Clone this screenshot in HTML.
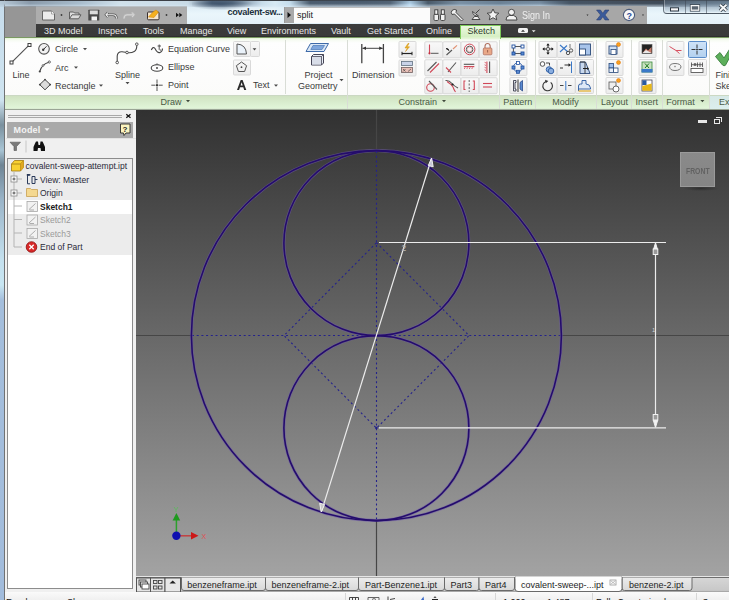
<!DOCTYPE html>
<html><head><meta charset="utf-8">
<style>
*{margin:0;padding:0;box-sizing:border-box}
html,body{width:729px;height:600px;overflow:hidden}
body{position:relative;font-family:"Liberation Sans",sans-serif;font-size:9px;color:#333;background:#dfe9f1}
.a{position:absolute}
.t{position:absolute;white-space:nowrap;line-height:1}
#glass{left:0;top:0;width:729px;height:40px;background:linear-gradient(180deg,#3c4046 0,#3c4046 1px,#b9d3e4 1px,#dcecf6 6px,#eaf6fb 14px,#e4f1f8 24px)}
#leftglass{left:0;top:0;width:5px;height:600px;background:linear-gradient(180deg,#3c4046 0,#3c4046 1px,#c6dcec 2px,#cfe4f0 100px,#7a909e 125px,#a8c4d4 150px,#6e8494 165px,#9ab4c8 200px,#c4e0ee 260px,#c8e6f2 285px,#a4bedc 300px,#a2bcdc 600px);border-right:1px solid #707274}
#appbtn{left:5px;top:6px;width:31px;height:31px;background:#969696}
#qat{left:36px;top:6px;width:151px;height:18px;background:#adadad}
#tabbar{left:36px;top:24px;width:693px;height:13px;background:linear-gradient(180deg,#3c3c3c,#393939 90%,#262626 100%)}
#greenline{left:5px;top:37px;width:724px;height:1px;background:#7a9a62}
#ribbon{left:5px;top:38px;width:724px;height:57px;background:linear-gradient(180deg,#e4f2d8 0,#f6fbf2 2px,#fefefe 5px,#fbfbfa 100%)}
#labelbar{left:5px;top:95px;width:724px;height:14px;background:linear-gradient(180deg,#cbd8c3 0,#cbd8c3 1px,#d0e2c2 1px,#e0f5d8 92%,#d8e6d0 100%)}
#rbottom{left:5px;top:109px;width:724px;height:1px;background:#9aa595}
#lpanel{left:5px;top:110px;width:131px;height:482px;background:#f0f0f0}
#canvas{left:136px;top:110px;width:593px;height:467px;background:linear-gradient(180deg,#313131 0%,#a3a3a3 100%)}
#doctabs{left:136px;top:577px;width:593px;height:15px;background:#d9d9d9}
#status{left:5px;top:592px;width:724px;height:8px;background:#f3f3f3}
.tab{color:#e6e6e6;top:27px}
.rt{color:#3a3a3a}
.lbl{color:#4a5a45;top:98px}
.sep{position:absolute;width:1px;background:#d6dcd2}
.btn{position:absolute;width:17px;height:16px;border:1px solid #dadada;background:linear-gradient(180deg,#fafafa,#ececec);border-radius:1px}
</style></head><body>
<div id="glass" class="a"></div>
<div id="leftglass" class="a"></div>
<div id="appbtn" class="a"></div>
<div id="qat" class="a"></div>
<div id="tabbar" class="a"></div>
<div id="greenline" class="a"></div>
<div id="ribbon" class="a"></div>
<div id="labelbar" class="a"></div>
<div id="rbottom" class="a"></div>
<div id="lpanel" class="a"></div>
<div id="canvas" class="a"></div>
<div id="doctabs" class="a"></div>
<div id="status" class="a"></div>


<svg class="a" style="left:136px;top:110px" width="593" height="467" viewBox="136 110 593 467">
<g fill="none">
<path d="M136 335.5 L192 335.5 M561 335.5 L729 335.5 M376.5 110 L376.5 151 M376.5 520 L376.5 577" stroke="#464646" stroke-width="1.2"/>
<g stroke="#24228c" stroke-width="1.1" stroke-dasharray="2 2.7">
<line x1="192" y1="335.5" x2="561" y2="335.5"/>
<line x1="376.5" y1="151" x2="376.5" y2="520"/>
<path d="M376.5 242.7 L469 335.5 L376.5 428.2 L284 335.5 Z"/>
</g>
<g stroke="#6e5aa8" stroke-width="3" opacity="0.55">
<circle cx="376.4" cy="335.6" r="185"/>
<circle cx="376.4" cy="243.1" r="92.5"/>
<circle cx="376.4" cy="428.1" r="92.5"/>
</g>
<g stroke="#240c6c" stroke-width="1.6">
<circle cx="376.4" cy="335.6" r="185"/>
<circle cx="376.4" cy="243.1" r="92.5"/>
<circle cx="376.4" cy="428.1" r="92.5"/>
</g>
<g stroke="#ececec" stroke-width="1.2">
<line x1="379" y1="242.5" x2="666" y2="242.5"/>
<line x1="379" y1="427.8" x2="666" y2="427.8"/>
<line x1="655.5" y1="243" x2="655.5" y2="427"/>
<line x1="321.5" y1="511.5" x2="431.5" y2="158.5"/>
</g>
</g>

<!-- arrowheads & dim text -->
<g fill="none" stroke="#f2f2f2" stroke-width="1">
<path d="M431.6 158 L428.3 165.5 L433.2 166.8 Z" fill="#c8c8d8"/>
<path d="M321.2 512 L324.6 504.5 L319.7 503.2 Z" fill="#c8c8c8"/>
<path d="M655.5 243 L653.3 250 L657.7 250 Z" fill="#f2f2f2"/>
<rect x="653.2" y="249" width="4.6" height="5.5" fill="#9a9a9a"/>
<path d="M655.5 427.3 L653.3 420.3 L657.7 420.3 Z" fill="#f2f2f2"/>
<rect x="653.2" y="414.5" width="4.6" height="5.5" fill="#9a9a9a"/>
</g>
<text x="401.5" y="251" font-family="Liberation Sans" font-size="8.5" fill="#b8b8b8">2</text>
<rect x="375.3" y="426.8" width="2.2" height="2.2" fill="#20208a"/>
<text x="652" y="332" font-family="Liberation Sans" font-size="6" fill="#cfcfcf">1</text>
<!-- triad -->
<line x1="176.4" y1="535.8" x2="176.4" y2="519" stroke="#2ca02c" stroke-width="1.5"/>
<path d="M172.6 520.5 L176.4 513 L180.2 520.5 Z" fill="#1e9a1e"/>
<text x="173.6" y="511.5" font-family="Liberation Sans" font-size="7.5" fill="#48c848" opacity="0.75">Y</text>
<line x1="176.4" y1="535.8" x2="192" y2="535.8" stroke="#c24040" stroke-width="1.5"/>
<path d="M191 532 L198.5 535.8 L191 539.6 Z" fill="#cc1818"/>
<text x="201.5" y="538.8" font-family="Liberation Sans" font-size="7" fill="#e05050">X</text>
<circle cx="176.4" cy="535.8" r="4.2" fill="#1010b0"/>
</svg>


<!-- title area -->
<div class="a" style="left:0;top:1px;width:729px;height:6px;background:linear-gradient(90deg,#b8cad8 0,#8a9aaa 30px,#a8bccc 80px,#d0e0ea 120px,#c8dae6 188px,#566a80 212px,#62768a 232px,#c8dcea 262px,#d8eaf4 275px,#c4dcec 290px,#4e5e70 310px,#5a6a7c 390px,#b8d8f0 410px,#4a5a6a 428px,#7a90a4 460px,#6a8094 500px,#8aa0b4 540px,#4a5664 570px,#3e4a58 660px,#7890a4 700px,#90a8bc 729px);-webkit-mask-image:linear-gradient(180deg,#000 40%,rgba(0,0,0,0.3) 100%)"></div>

<div class="a" style="left:192px;top:0px;width:64px;height:12px;background:radial-gradient(ellipse 50% 50% at 45% 35%,rgba(50,70,95,0.7),rgba(50,70,95,0) 100%)"></div>
<div class="a" style="left:290px;top:0px;width:140px;height:7px;background:radial-gradient(ellipse 50% 60% at 50% 20%,rgba(60,80,100,0.5),rgba(60,80,100,0) 100%)"></div>
<div class="a" style="left:500px;top:0px;width:120px;height:7px;background:radial-gradient(ellipse 50% 60% at 50% 20%,rgba(60,80,100,0.45),rgba(60,80,100,0) 100%)"></div>
<div class="t" style="left:227.5px;top:7.8px;font-size:9.2px;font-weight:bold;letter-spacing:-0.35px;color:#22313e;text-shadow:0 0 5px #fff">covalent-sw...</div>
<div class="a" style="left:284px;top:7px;width:10px;height:16px;background:#a9a9a9;border-left:1px solid #9a9a9a"></div>
<div class="a" style="left:294px;top:7px;width:136px;height:16px;background:#fbfbfb;border-top:1px solid #bdbdbd"></div>
<div class="t" style="left:297px;top:11.3px;font-size:9px;color:#222">split</div>
<div class="a" style="left:430px;top:6px;width:217px;height:18px;background:#a7a7a7"></div>
<div class="t" style="left:521.5px;top:10.6px;font-size:10px;color:#f0f0f0;transform:scaleX(0.9);transform-origin:left top">Sign In</div>
<!-- window controls -->
<div class="a" style="left:663px;top:-2px;width:68px;height:16px;border:1px solid rgba(50,60,70,0.6);border-radius:0 0 0 4px;background:linear-gradient(180deg,rgba(70,85,100,0.75),rgba(120,140,160,0.45) 60%,rgba(200,220,235,0.3));box-shadow:inset 0 0 0 1px rgba(255,255,255,0.3)"></div>
<div class="a" style="left:684.5px;top:0;width:1px;height:14px;background:rgba(60,70,80,0.55)"></div>
<div class="a" style="left:706px;top:0;width:1px;height:14px;background:rgba(60,70,80,0.55)"></div>
<svg class="a" style="left:0;top:0" width="729" height="37" viewBox="0 0 729 37">
<g>
<rect x="670.5" y="7.8" width="8" height="3.2" fill="#f8f8f8" stroke="#2a3540" stroke-width="1"/>
<rect x="691.2" y="5.6" width="7.6" height="4.6" fill="#3a4550" stroke="#2a3540" stroke-width="2.6"/>
<rect x="691.2" y="5.6" width="7.6" height="4.6" fill="#5a6570" stroke="#f8f8f8" stroke-width="1.3"/>
<path d="M720 4.8 L726.5 10.8 M726.5 4.8 L720 10.8" stroke="#2a3540" stroke-width="3.6"/>
<path d="M720 4.8 L726.5 10.8 M726.5 4.8 L720 10.8" stroke="#f8f8f8" stroke-width="2"/>
<!-- QAT -->
<path d="M42.5 11 L51.5 11 L54.5 14 L54.5 20 L42.5 20 Z" fill="#ececec" stroke="#5a5a5a" stroke-width="0.9"/>
<path d="M51.5 11 L51.5 14 L54.5 14" fill="#fff" stroke="#777" stroke-width="0.6"/>
<circle cx="61.5" cy="15" r="0.9" fill="#3a3a3a"/>
<path d="M69.5 18.8 L69.5 12 L73.5 12 L74.5 13 L79 13 L79 14.8 M69.5 18.8 L72 14.8 L81 14.8 L78.5 18.8 Z" fill="#dcdcdc" stroke="#555" stroke-width="0.9"/>
<rect x="88.3" y="9.8" width="11" height="10.8" rx="0.5" fill="#4a4a4a"/>
<rect x="89.8" y="10.5" width="8" height="3.8" fill="#dcdcdc"/>
<rect x="91.5" y="16.5" width="5.5" height="4" fill="#f4f4f4"/>
<path d="M108 12.5 L106 14.8 L108 17 M106.3 14.8 L113 14.8 Q116.5 14.8 116.5 18.5" fill="none" stroke="#555" stroke-width="2.4"/>
<path d="M108 12.5 L106 14.8 L108 17 M106.3 14.8 L113 14.8 Q116.5 14.8 116.5 18.5" fill="none" stroke="#f0f0f0" stroke-width="1.1"/>
<path d="M132 12.5 L134 14.8 L132 17 M133.7 14.8 L127 14.8 Q124 14.8 124 18.5" fill="none" stroke="#bdbdbd" stroke-width="2"/>
<path d="M132 12.5 L134 14.8 L132 17 M133.7 14.8 L127 14.8 Q124 14.8 124 18.5" fill="none" stroke="#d6d6d6" stroke-width="1"/>
<rect x="147.5" y="12" width="11.5" height="7.8" rx="1" fill="#f4e6d0" stroke="#3a3030" stroke-width="1"/>
<path d="M148.5 17 L153 12 L156 10 L158.5 12 L154 17.5 Z" fill="#f4b020" stroke="#d08000" stroke-width="0.5"/>
<circle cx="166.5" cy="15" r="0.9" fill="#3a3a3a"/>
<path d="M176 12.8 L179 15 L176 17.2 Z M179.3 12.8 L182.3 15 L179.3 17.2 Z" fill="#111"/>
<!-- search arrow -->
<path d="M287.5 12 L291 15 L287.5 18 Z" fill="#111"/>
<!-- info center icons -->
<g fill="#f2f2f2" stroke="#3a3a3a" stroke-width="0.9">
<rect x="434" y="14" width="4.5" height="6.5" rx="1.2"/>
<rect x="440.5" y="14" width="4.5" height="6.5" rx="1.2"/>
<rect x="434.8" y="9.8" width="3" height="4.5"/>
<rect x="441.3" y="9.8" width="3" height="4.5"/>
<path d="M452 10.5 Q454 8.5 456.5 10 L456 12.5 L463 19.5 L461.5 21 L454.5 14 L452 14.5 Q450.5 12.5 452 10.5 Z"/>
<path d="M472 19.5 L480 19.5 L477.5 16.5 L474.5 16.5 Z"/>
<path d="M472.5 11.5 Q473 16.5 478.5 16 Z"/>
<path d="M476 13 L479.5 9.5"/>
<path d="M493 9 L494.8 12.8 L498.8 13.2 L495.8 15.8 L496.7 19.8 L493 17.7 L489.3 19.8 L490.2 15.8 L487.2 13.2 L491.2 12.8 Z"/>
<circle cx="511.5" cy="12.3" r="3"/>
<path d="M506 20 Q506 16 509.5 15.5 L513.5 15.5 Q517 16 517 20 Z"/>
</g>
<path d="M586.5 14.5 L588.5 14.5 L587.5 16 Z" fill="#333"/>
<path d="M596.5 10 L600.5 10 L602.8 13.2 L605 10 L609 10 L605 15 L609 20 L605 20 L602.8 16.8 L600.5 20 L596.5 20 L600.5 15 Z" fill="#3a5a9a" stroke="#2a3a6a" stroke-width="0.5"/>
<circle cx="629" cy="15" r="5.6" fill="#f8f8f8" stroke="#4a5a7a" stroke-width="1.1"/>
<text x="626.4" y="18.5" font-family="Liberation Sans" font-weight="bold" font-size="9" fill="#2a4a9a">?</text>
<path d="M642 14.5 L644 14.5 L643 16 Z" fill="#333"/>
</g>
</svg>

<!-- left panel -->
<div class="a" style="left:8px;top:114.5px;width:114px;height:1px;background:#a8a8a8"></div>
<div class="a" style="left:8px;top:116.5px;width:114px;height:1px;background:#a8a8a8"></div>
<div class="a" style="left:7px;top:122px;width:126px;height:15.5px;background:#a9a9a9"></div>
<div class="t" style="left:13.5px;top:126.3px;font-size:9px;font-weight:bold;color:#f4f4f4;letter-spacing:0.2px">Model</div>
<div class="a" style="left:6px;top:137.5px;width:130px;height:1px;background:#e2e2e2"></div>
<div class="a" style="left:7px;top:158px;width:126px;height:431px;background:#fff;border:1px solid #8c8c8c"></div>
<div class="a" style="left:8px;top:159px;width:124px;height:41px;background:#ececec"></div>
<div class="a" style="left:8px;top:213.5px;width:124px;height:41.5px;background:#ececec"></div>
<div class="t" style="left:25.5px;top:161.5px;font-size:8.5px;color:#2a2a38">covalent-sweep-attempt.ipt</div>
<div class="t" style="left:40px;top:175.5px;font-size:8.5px;color:#2a2a38">View: Master</div>
<div class="t" style="left:40px;top:189px;font-size:8.5px;color:#2a2a38">Origin</div>
<div class="t" style="left:40px;top:202.5px;font-size:8.5px;font-weight:bold;color:#1a1a1a">Sketch1</div>
<div class="t" style="left:40px;top:216px;font-size:8.5px;color:#9a9a9a">Sketch2</div>
<div class="t" style="left:40px;top:229.5px;font-size:8.5px;color:#9a9a9a">Sketch3</div>
<div class="t" style="left:40px;top:243px;font-size:8.5px;color:#2a2a38">End of Part</div>
<svg class="a" style="left:0;top:110px" width="136" height="150" viewBox="0 110 136 150">
<g>
<!-- × -->
<path d="M126.3 114.3 L130.5 117.7 M130.5 114.3 L126.3 117.7" stroke="#111" stroke-width="1.3"/>
<!-- model dropdown -->
<path d="M44.5 128.3 L49.5 128.3 L47 131 Z" fill="#f4f4f4"/>
<!-- help -->
<path d="M120.5 124 L130 124 L130 133 L126 133 L124 135.5 L123.5 133 L120.5 133 Z" fill="#fbf4c0" stroke="#2a2a2a" stroke-width="0.9"/>
<text x="122.6" y="131.6" font-family="Liberation Sans" font-weight="bold" font-size="8" fill="#222">?</text>
<!-- filter -->
<path d="M10 142.2 L20.5 142.2 L16.5 146.5 L16.5 150.5 L14 150.5 L14 146.5 Z" fill="#7a7a7a" stroke="#555" stroke-width="0.6"/>
<line x1="26" y1="140.5" x2="26" y2="152.5" stroke="#c6c6c6" stroke-width="1"/>
<!-- binoculars -->
<path d="M33.5 151 L33.5 147 L35 143.5 L36 141.5 L38 141.5 L38.5 145 L40 145 L40.5 141.5 L42.5 141.5 L43.5 143.5 L45 147 L45 151 L41 151 L40.5 148 L38 148 L37.5 151 Z" fill="#111"/>
<!-- tree lines -->
<g stroke="#b4b4b4" stroke-width="1">
<line x1="14" y1="172" x2="14" y2="247"/>
<line x1="14" y1="247" x2="22" y2="247"/>
<line x1="14" y1="233" x2="22" y2="233"/>
<line x1="14" y1="219.5" x2="22" y2="219.5"/>
<line x1="14" y1="206" x2="22" y2="206"/>
<line x1="17" y1="193" x2="22" y2="193"/>
<line x1="17" y1="179" x2="22" y2="179"/>
</g>
<rect x="11" y="176" width="6" height="6" fill="#fafafa" stroke="#8a8a8a" stroke-width="0.8"/>
<path d="M12.5 179 L15.5 179 M14 177.5 L14 180.5" stroke="#333" stroke-width="0.8"/>
<rect x="11" y="190" width="6" height="6" fill="#fafafa" stroke="#8a8a8a" stroke-width="0.8"/>
<path d="M12.5 193 L15.5 193 M14 191.5 L14 194.5" stroke="#333" stroke-width="0.8"/>
<!-- part cube -->
<path d="M11.5 164 L14.5 160.5 L23.5 160.5 L23.5 167.5 L20.5 171 L11.5 171 Z" fill="#f8d030" stroke="#a07810" stroke-width="0.8"/>
<path d="M11.5 164 L20.5 164 L23.5 160.5 M20.5 164 L20.5 171" fill="none" stroke="#a07810" stroke-width="0.8"/>
<path d="M20.5 164 L23.5 160.5 L23.5 167.5 L20.5 171 Z" fill="#e0a820"/>
<!-- view icon -->
<path d="M27.5 174.8 L30.5 174.8 M27.5 174.8 L27.5 183.8 L30 183.8 M32 176.5 L35 176.5 L35 183.5 L32 183.5 Z M35 179.5 L37.5 179.5" fill="none" stroke="#2a3a5a" stroke-width="1"/>
<rect x="26.8" y="174" width="3" height="1.8" fill="#2a3a5a"/>
<!-- folder -->
<path d="M26.5 196.5 L26.5 188.5 L30.5 188.5 L31.5 189.5 L37.5 189.5 L37.5 196.5 Z" fill="#f4d890" stroke="#c8a050" stroke-width="0.8"/>
<!-- sketch icons -->
<g fill="#f2f2f2" stroke="#a8a8a8" stroke-width="0.8">
<rect x="27" y="201.5" width="10.5" height="10"/>
<rect x="27" y="215" width="10.5" height="10"/>
<rect x="27" y="228.5" width="10.5" height="10"/>
</g>
<g fill="none" stroke="#9a9a9a" stroke-width="0.8">
<path d="M29 209.5 L35.5 203.5 M29.5 210 L34 210"/>
<path d="M29 223 L35.5 217 M29.5 223.5 L34 223.5"/>
<path d="M29 236.5 L35.5 230.5 M29.5 237 L34 237"/>
</g>
<!-- end of part -->
<circle cx="31.5" cy="247" r="5.3" fill="#d82828" stroke="#8a1010" stroke-width="0.8"/>
<path d="M29.3 244.8 L33.7 249.2 M33.7 244.8 L29.3 249.2" stroke="#fff" stroke-width="1.3"/>
</g>
</svg>

<!-- doc tabs -->
<div class="a" style="left:136px;top:576px;width:593px;height:16px;background:linear-gradient(180deg,#d8d8d8,#c8c8c8 90%,#9a9a9a 100%)"></div>
<div class="a" style="left:136px;top:576px;width:593px;height:1px;background:#e6e6e6"></div>
<div class="a" style="left:136px;top:577px;width:593px;height:1px;background:#6e6e6e"></div>
<svg class="a" style="left:136px;top:576px" width="593" height="17" viewBox="136 576 593 17">
<defs><linearGradient id="tg" x1="0" y1="0" x2="0" y2="1"><stop offset="0" stop-color="#ececec"/><stop offset="1" stop-color="#d8d8d8"/></linearGradient></defs>
<g stroke="#555" stroke-width="1">
<rect x="136.5" y="578" width="14" height="14" fill="#e4e4e4"/>
<rect x="150.5" y="578" width="14.5" height="14" fill="#e4e4e4"/>
<rect x="165" y="578" width="15.5" height="14" fill="#e8e8e8"/>
</g>
<g fill="none" stroke="#444" stroke-width="0.9">
<rect x="139" y="580" width="7" height="5"/>
<rect x="140.5" y="582" width="7" height="5" fill="#f0f0f0"/>
<rect x="142" y="584" width="7" height="5" fill="#fff"/>
<rect x="153.5" y="580.5" width="3.5" height="3"/><rect x="158.5" y="580.5" width="3.5" height="3"/>
<rect x="153.5" y="586" width="3.5" height="3"/><rect x="158.5" y="586" width="3.5" height="3"/>
</g>
<path d="M169.5 583.5 L172.7 580.5 L175.9 583.5 Z" fill="#222"/>
<g stroke="#6a6a6a" stroke-width="1" fill="url(#tg)">
<path d="M181.5 577.5 L181.5 588 Q181.5 590.5 184 590.5 L263 590.5 Q265.5 590.5 265.5 588 L265.5 577.5"/>
<path d="M265.5 577.5 L265.5 588 Q265.5 590.5 268 590.5 L356 590.5 Q358.5 590.5 358.5 588 L358.5 577.5"/>
<path d="M358.5 577.5 L358.5 588 Q358.5 590.5 361 590.5 L442 590.5 Q444.5 590.5 444.5 588 L444.5 577.5"/>
<path d="M444.5 577.5 L444.5 588 Q444.5 590.5 447 590.5 L476.5 590.5 Q479 590.5 479 588 L479 577.5"/>
<path d="M479 577.5 L479 588 Q479 590.5 481.5 590.5 L512 590.5 Q514.5 590.5 514.5 588 L514.5 577.5"/>
<path d="M622 577.5 L622 588 Q622 590.5 624.5 590.5 L689.5 590.5 Q692 590.5 692 588 L692 577.5"/>
</g>
<path d="M515 577 L515 588.5 Q515 591.5 518 591.5 L619 591.5 Q622 591.5 622 588.5 L622 577 Z" fill="#fdfdfd" stroke="#6a6a6a" stroke-width="1"/>
<rect x="515.5" y="576.5" width="106" height="2" fill="#fdfdfd"/>
<rect x="610" y="580" width="6" height="5" fill="none" stroke="#9a9a9a" stroke-width="0.8"/>
<path d="M611 581 L615 584 M615 581 L611 584" stroke="#9a9a9a" stroke-width="0.6"/>
</g>
</svg>
<div class="t" style="left:187.3px;top:581px;font-size:9px;color:#1e1e1e">benzeneframe.ipt</div>
<div class="t" style="left:271.5px;top:581px;font-size:9px;color:#1e1e1e">benzeneframe-2.ipt</div>
<div class="t" style="left:365px;top:581px;font-size:9px;color:#1e1e1e">Part-Benzene1.ipt</div>
<div class="t" style="left:450.5px;top:581px;font-size:9px;color:#1e1e1e">Part3</div>
<div class="t" style="left:485px;top:581px;font-size:9px;color:#1e1e1e">Part4</div>
<div class="t" style="left:521px;top:581px;font-size:9px;color:#1e1e1e">covalent-sweep-...ipt</div>
<div class="t" style="left:629px;top:581px;font-size:9px;color:#1e1e1e">benzene-2.ipt</div>
<!-- status bar -->
<div class="a" style="left:5px;top:592px;width:724px;height:8px;background:linear-gradient(180deg,#fafafa,#f0f0f0)"></div>
<div class="a" style="left:5px;top:589px;width:131px;height:3px;background:#f0f0f0"></div>
<div class="t" style="left:6px;top:598.3px;font-size:9px;color:#111">Ready</div>
<div class="t" style="left:67px;top:598.3px;font-size:9px;color:#111">Ske</div>
<div class="t" style="left:503px;top:597.9px;font-size:9px;color:#111">1.000</div>
<div class="t" style="left:547px;top:597.9px;font-size:9px;color:#111">1.487</div>
<div class="t" style="left:596px;top:597.9px;font-size:9px;color:#111">Fully Constrained</div>
<div class="t" style="left:703px;top:597.9px;font-size:9px;color:#111">3</div>
<svg class="a" style="left:340px;top:592px" width="389" height="8" viewBox="340 592 389 8">
<g fill="none" stroke="#333" stroke-width="0.9">
<path d="M349.5 600 L349.5 597.5 L358.5 597.5 L358.5 600 M352.5 597.5 L352.5 600 M355.5 597.5 L355.5 600"/>
<path d="M368 600 L368 597.5 L379 597.5 L379 600" stroke="#555"/>
<path d="M372 599.5 L374 598.5 L376 599.5" stroke="#555"/>
<path d="M388 596.5 L388 600 M390 599.5 L395 598.5"/>
</g>
<path d="M421 600 L423.5 596.5 L424 600 Z" fill="#3a6ac8"/>
<path d="M435 596.3 L436.6 597.8 L433.4 597.8 Z M432 599 L438 599 L438 600 L432 600 Z" fill="#222"/>
<g></g>
<g stroke="#d6d6d6" stroke-width="1">
<line x1="345.5" y1="593" x2="345.5" y2="600"/>
<line x1="495.5" y1="593" x2="495.5" y2="600"/>
<line x1="592.5" y1="593" x2="592.5" y2="600"/>
<line x1="696.5" y1="593" x2="696.5" y2="600"/>
</g>
</svg>

<!-- viewcube -->
<div class="a" style="left:683px;top:186px;width:36px;height:5px;background:radial-gradient(ellipse at center,rgba(20,20,20,0.45),rgba(20,20,20,0) 70%)"></div>
<div class="a" style="left:680px;top:152px;width:35px;height:35px;background:linear-gradient(180deg,#8a8a8a,#858585);border:1px solid #9a9a9a"></div>
<div class="t" style="left:685.7px;top:165.5px;font-size:9.5px;font-weight:bold;color:#626262;transform:scaleX(0.72);transform-origin:left top">FRONT</div>
<div class="a" style="left:698px;top:120px;width:9px;height:2.5px;background:#e8e8e8"></div>
<div class="a" style="left:714px;top:118.5px;width:5.5px;height:5px;border:1.3px solid #e8e8e8;border-top-width:1.8px"></div>
<div class="a" style="left:716px;top:116.5px;width:5.5px;height:5px;border-top:1.3px solid #e8e8e8;border-right:1.3px solid #e8e8e8"></div>

<!-- tabs -->
<div class="t tab" style="left:44px">3D Model</div>
<div class="t tab" style="left:98px">Inspect</div>
<div class="t tab" style="left:143px">Tools</div>
<div class="t tab" style="left:180px">Manage</div>
<div class="t tab" style="left:227px">View</div>
<div class="t tab" style="left:261px">Environments</div>
<div class="t tab" style="left:331px">Vault</div>
<div class="t tab" style="left:367px">Get Started</div>
<div class="t tab" style="left:426px">Online</div>
<div class="a" style="left:460px;top:24.5px;width:41px;height:14px;background:linear-gradient(180deg,#eaf8de,#d6efc4 80%,#e8f6dc);border:1px solid #7cc858;border-bottom:none"></div>
<div class="t tab" style="left:467.5px;color:#2e3a2c">Sketch</div>
<svg class="a" style="left:515px;top:26px" width="24" height="10" viewBox="515 26 24 10">
<rect x="518" y="28" width="10" height="5" rx="1.5" fill="#f2f2f2"/>
<path d="M521 31.8 L523 29.8 L525 31.8 Z" fill="#333"/>
<path d="M531.8 30.3 L535.6 30.3 L533.7 32.3 Z" fill="#e8e8e8"/>
</svg>


<div class="a" style="left:710px;top:96px;width:19px;height:13px;background:linear-gradient(180deg,#d6e8e6,#dcefee)"></div>
<!-- ribbon -->
<div class="t rt" style="left:12.5px;top:71.2px;">Line</div>
<div class="t rt" style="left:55px;top:45.3px;">Circle</div>
<div class="t rt" style="left:55px;top:63.7px;">Arc</div>
<div class="t rt" style="left:55px;top:81.6px;">Rectangle</div>
<div class="t rt" style="left:115px;top:71.2px;">Spline</div>
<div class="t rt" style="left:168px;top:45.1px;">Equation Curve</div>
<div class="t rt" style="left:168px;top:63.3px;">Ellipse</div>
<div class="t rt" style="left:168px;top:81.0px;">Point</div>
<div class="t rt" style="left:253px;top:81.4px;">Text</div>
<div class="t rt" style="left:304.5px;top:71.0px;">Project</div>
<div class="t rt" style="left:298px;top:81.8px;">Geometry</div>
<div class="t rt" style="left:352px;top:71.0px;">Dimension</div>
<div class="t rt" style="left:715.5px;top:71.0px;">Finish</div>
<div class="t rt" style="left:715.5px;top:81.9px;">Sketch</div>
<div class="t lbl" style="left:160.5px;top:97.9px;">Draw</div>
<div class="t lbl" style="left:398.4px;top:97.9px;">Constrain</div>
<div class="t lbl" style="left:503.2px;top:97.9px;">Pattern</div>
<div class="t lbl" style="left:552.3px;top:97.9px;">Modify</div>
<div class="t lbl" style="left:600.9px;top:97.9px;">Layout</div>
<div class="t lbl" style="left:635.4px;top:97.9px;">Insert</div>
<div class="t lbl" style="left:666.2px;top:97.9px;">Format</div>
<div class="t lbl" style="left:719px;top:97.9px;">Exit</div>
<svg class="a" style="left:0;top:0" width="729" height="110" viewBox="0 0 729 110">
<defs><linearGradient id="bg" x1="0" y1="0" x2="0" y2="1"><stop offset="0" stop-color="#f9f9f9"/><stop offset="1" stop-color="#ececec"/></linearGradient><linearGradient id="bb" x1="0" y1="0" x2="0" y2="1"><stop offset="0" stop-color="#cfe3f7"/><stop offset="1" stop-color="#b3d1ef"/></linearGradient></defs>
<line x1="285.5" y1="40" x2="285.5" y2="94" stroke="#d9ddd6" stroke-width="1"/>
<line x1="347.5" y1="40" x2="347.5" y2="109" stroke="#d9ddd6" stroke-width="1"/>
<line x1="499.5" y1="40" x2="499.5" y2="109" stroke="#d9ddd6" stroke-width="1"/>
<line x1="535.5" y1="40" x2="535.5" y2="109" stroke="#d9ddd6" stroke-width="1"/>
<line x1="596.5" y1="40" x2="596.5" y2="109" stroke="#d9ddd6" stroke-width="1"/>
<line x1="631.5" y1="40" x2="631.5" y2="109" stroke="#d9ddd6" stroke-width="1"/>
<line x1="662.5" y1="40" x2="662.5" y2="109" stroke="#d9ddd6" stroke-width="1"/>
<line x1="709.5" y1="40" x2="709.5" y2="109" stroke="#d9ddd6" stroke-width="1"/>
<path d="M83 48 L87 48 L85 50.2 Z" fill="#4a4a4a"/>
<path d="M74 66.5 L78 66.5 L76 68.7 Z" fill="#4a4a4a"/>
<path d="M99 84.5 L103 84.5 L101 86.7 Z" fill="#4a4a4a"/>
<path d="M125.5 82 L129.5 82 L127.5 84.2 Z" fill="#4a4a4a"/>
<path d="M274 84.5 L278 84.5 L276 86.7 Z" fill="#4a4a4a"/>
<path d="M339.5 79 L343.5 79 L341.5 81.2 Z" fill="#4a4a4a"/>
<path d="M186 100 L190 100 L188 102.2 Z" fill="#3f4a3c"/>
<path d="M442 100 L446 100 L444 102.2 Z" fill="#3f4a3c"/>
<path d="M700.4 100 L704.4 100 L702.4 102.2 Z" fill="#3f4a3c"/>
<rect x="233.5" y="41.5" width="17" height="15" rx="1" fill="url(#bg)" stroke="#d9d9d9"/>
<rect x="250.5" y="41.5" width="9" height="15" rx="1" fill="url(#bg)" stroke="#d9d9d9"/>
<rect x="233.5" y="60.0" width="17" height="15" rx="1" fill="url(#bg)" stroke="#d9d9d9"/>
<rect x="399.0" y="41.5" width="17" height="16" rx="1" fill="url(#bg)" stroke="#d9d9d9"/>
<rect x="399.0" y="60.0" width="17" height="16" rx="1" fill="url(#bg)" stroke="#d9d9d9"/>
<rect x="424.8" y="41.8" width="18" height="16" rx="1" fill="url(#bg)" stroke="#d9d9d9"/>
<rect x="442.9" y="41.8" width="18" height="16" rx="1" fill="url(#bg)" stroke="#d9d9d9"/>
<rect x="461.0" y="41.8" width="18" height="16" rx="1" fill="url(#bg)" stroke="#d9d9d9"/>
<rect x="479.1" y="41.8" width="18" height="16" rx="1" fill="url(#bg)" stroke="#d9d9d9"/>
<rect x="424.8" y="59.8" width="18" height="16" rx="1" fill="url(#bg)" stroke="#d9d9d9"/>
<rect x="442.9" y="59.8" width="18" height="16" rx="1" fill="url(#bg)" stroke="#d9d9d9"/>
<rect x="461.0" y="59.8" width="18" height="16" rx="1" fill="url(#bg)" stroke="#d9d9d9"/>
<rect x="479.1" y="59.8" width="18" height="16" rx="1" fill="url(#bg)" stroke="#d9d9d9"/>
<rect x="424.8" y="77.7" width="18" height="16" rx="1" fill="url(#bg)" stroke="#d9d9d9"/>
<rect x="442.9" y="77.7" width="18" height="16" rx="1" fill="url(#bg)" stroke="#d9d9d9"/>
<rect x="461.0" y="77.7" width="18" height="16" rx="1" fill="url(#bg)" stroke="#d9d9d9"/>
<rect x="479.1" y="77.7" width="18" height="16" rx="1" fill="url(#bg)" stroke="#d9d9d9"/>
<rect x="509.9" y="41.5" width="17" height="16" rx="1" fill="url(#bg)" stroke="#d9d9d9"/>
<rect x="509.9" y="59.5" width="17" height="16" rx="1" fill="url(#bg)" stroke="#d9d9d9"/>
<rect x="509.9" y="77.5" width="17" height="16" rx="1" fill="url(#bg)" stroke="#d9d9d9"/>
<rect x="539.0" y="41.5" width="18" height="16" rx="1" fill="url(#bg)" stroke="#d9d9d9"/>
<rect x="557.2" y="41.5" width="18" height="16" rx="1" fill="url(#bg)" stroke="#d9d9d9"/>
<rect x="575.5" y="41.5" width="18" height="16" rx="1" fill="url(#bg)" stroke="#d9d9d9"/>
<rect x="539.0" y="59.5" width="18" height="16" rx="1" fill="url(#bg)" stroke="#d9d9d9"/>
<rect x="557.2" y="59.5" width="18" height="16" rx="1" fill="url(#bg)" stroke="#d9d9d9"/>
<rect x="575.5" y="59.5" width="18" height="16" rx="1" fill="url(#bg)" stroke="#d9d9d9"/>
<rect x="539.0" y="77.5" width="18" height="16" rx="1" fill="url(#bg)" stroke="#d9d9d9"/>
<rect x="557.2" y="77.5" width="18" height="16" rx="1" fill="url(#bg)" stroke="#d9d9d9"/>
<rect x="575.5" y="77.5" width="18" height="16" rx="1" fill="url(#bg)" stroke="#d9d9d9"/>
<rect x="606.0" y="41.5" width="17" height="16" rx="1" fill="url(#bg)" stroke="#d9d9d9"/>
<rect x="639.0" y="41.5" width="17" height="16" rx="1" fill="url(#bg)" stroke="#d9d9d9"/>
<rect x="606.0" y="59.5" width="17" height="16" rx="1" fill="url(#bg)" stroke="#d9d9d9"/>
<rect x="639.0" y="59.5" width="17" height="16" rx="1" fill="url(#bg)" stroke="#d9d9d9"/>
<rect x="606.0" y="77.5" width="17" height="16" rx="1" fill="url(#bg)" stroke="#d9d9d9"/>
<rect x="639.0" y="77.5" width="17" height="16" rx="1" fill="url(#bg)" stroke="#d9d9d9"/>
<rect x="666.9" y="41.5" width="17" height="16" rx="1" fill="url(#bg)" stroke="#d9d9d9"/>
<rect x="666.9" y="59.5" width="17" height="16" rx="1" fill="url(#bg)" stroke="#d9d9d9"/>
<rect x="688.5" y="41.5" width="18" height="16" rx="1" fill="url(#bb)" stroke="#5a8cc8"/>
<rect x="688.5" y="59.5" width="18" height="16" rx="1" fill="url(#bg)" stroke="#d9d9d9"/>
<g fill="none" stroke="#505050" stroke-width="1">
<!-- line -->
<line x1="12.2" y1="61.8" x2="28.6" y2="45.6" stroke-width="1.1"/>
<rect x="10" y="61" width="3" height="3" fill="#fff" stroke="#404040"/>
<rect x="28" y="43.5" width="3" height="3" fill="#fff" stroke="#404040"/>
<!-- circle -->
<circle cx="44" cy="48.8" r="5.3" fill="#f2f2f2" stroke="#555" stroke-width="1.1"/>
<line x1="43" y1="50" x2="46.5" y2="46.3" stroke="#333"/>
<circle cx="43.2" cy="49.8" r="1.2" fill="#333" stroke="none"/>
<!-- arc -->
<path d="M39.8 71.3 Q41.5 64.5 48.8 62.2" stroke="#444" stroke-width="1.1"/>
<circle cx="39.8" cy="71.5" r="1.1" fill="#444" stroke="none"/>
<circle cx="43" cy="65.5" r="0.9" fill="#fff" stroke="#444" stroke-width="0.7"/>
<circle cx="49.3" cy="62" r="1.1" fill="#fff" stroke="#444" stroke-width="0.8"/>
<!-- rectangle -->
<path d="M45 79.5 L50.3 84.6 L45 89.8 L39.7 84.6 Z" fill="#dcdcdc" stroke="#444"/>
<circle cx="45" cy="79.6" r="0.9" fill="#444" stroke="none"/>
<circle cx="39.8" cy="84.6" r="0.9" fill="#444" stroke="none"/>
<circle cx="50.2" cy="84.6" r="0.9" fill="#444" stroke="none"/>
<!-- spline -->
<path d="M117.2 62.5 L117.2 56 Q117.5 51.5 122 51.7 L127 52.5 Q131 53.3 134.2 51.5 Q136.8 50 136.8 45.5" stroke="#444" stroke-width="1.1"/>
<circle cx="117.2" cy="62.5" r="1.3" fill="#fff" stroke="#444" stroke-width="0.9"/>
<circle cx="127" cy="52.5" r="1.3" fill="#fff" stroke="#444" stroke-width="0.9"/>
<circle cx="136.8" cy="44.2" r="1.3" fill="#fff" stroke="#444" stroke-width="0.9"/>
<!-- equation curve -->
<path d="M151.3 50 Q153 46 155 48.5 Q157.5 53.5 160 52.5 Q162.5 51.5 162.5 48.5" stroke="#444" stroke-width="1.1"/>
<path d="M159.2 44.5 L159.2 49.5 Q159.5 50.5 161 50 M157.6 46 L161 46" stroke="#444" stroke-width="0.9"/>
<!-- ellipse -->
<ellipse cx="157" cy="68" rx="5.8" ry="3.3" stroke="#444" stroke-width="1.1"/>
<circle cx="157" cy="68" r="0.9" fill="#333" stroke="none"/>
<path d="M155.8 64.8 L157 63.6 L158.2 64.8" stroke="#444" stroke-width="0.8"/>
<!-- point -->
<path d="M151.3 85.2 L155.5 85.2 M158.5 85.2 L162.7 85.2 M157 79.5 L157 83.7 M157 86.7 L157 91" stroke="#555" stroke-width="1"/>
<rect x="156" y="84.2" width="2" height="2" fill="#333" stroke="none"/>
<!-- fillet -->
<path d="M237 54 L237 44 Q246 44.5 246.5 54 Z" fill="#eaf2fa" stroke="#555" stroke-width="1"/>
<!-- polygon -->
<path d="M241.5 62 L246.6 65.7 L244.6 71.5 L238.4 71.5 L236.4 65.7 Z" fill="none" stroke="#555" stroke-width="1"/>
<circle cx="241.5" cy="67.2" r="0.9" fill="#444" stroke="none"/>
<!-- project geometry -->
<path d="M310.5 43.5 L328.5 43.5 L324 51.5 L306 51.5 Z" fill="#dbe8f6" stroke="#3e6aa8" stroke-width="1"/>
<path d="M313 45.5 L324.5 45.5 L322 49.5 L310.8 49.5 Z" fill="#7fa6dc" stroke="#4a78b8" stroke-width="0.7"/>
<path d="M311.5 56.5 L313.5 54.5 L323.5 54.5 L323.5 63 L321.5 65 L311.5 65 Z" fill="#e8eef6" stroke="#445" stroke-width="1"/>
<path d="M311.5 56.5 L321.5 56.5 L323.5 54.5 M321.5 56.5 L321.5 65" stroke="#445" stroke-width="0.8"/>
<path d="M312 57 L321 57 L321 64.5 L312 64.5 Z" fill="#d8dde8" stroke="none"/>
<!-- dimension -->
<path d="M361.8 44 L361.8 63.2 M383.4 44 L383.4 63.2" stroke="#444" stroke-width="1.3"/>
<path d="M362.5 48.3 L382.7 48.3" stroke="#444" stroke-width="1"/>
<path d="M362.5 48.3 L366 46.5 L366 50.1 Z M382.7 48.3 L379.2 46.5 L379.2 50.1 Z" fill="#333" stroke="none"/>
<!-- auto dimension -->
<path d="M408 43.5 L405 48 L407.5 48 L405.5 51.5 L409.5 46.8 L407 46.8 L409 43.5 Z" fill="#f2b820" stroke="#c98a10" stroke-width="0.5"/>
<path d="M402 53.5 L412 53.5" stroke="#222" stroke-width="1.2"/>
<path d="M402 51.8 L402 55.2 M412 51.8 L412 55.2" stroke="#222" stroke-width="1"/>
<!-- show constraints -->
<rect x="401.5" y="61.5" width="11" height="4" fill="#c9d3e8" stroke="#607080" stroke-width="0.8"/>
<rect x="401.5" y="67.5" width="11" height="5" fill="#e9c0b8" stroke="#706060" stroke-width="0.8"/>
<path d="M403 69 L405.5 71.5 M405.5 69 L403 71.5 M408 71.5 L411 69" stroke="#333" stroke-width="0.6"/>
</g>
<path d="M237 90 L240.7 80 L242.6 80 L246.3 90 L244.2 90 L243.3 87.3 L240 87.3 L239.1 90 Z M240.6 85.6 L242.7 85.6 L241.65 82.3 Z" fill="#2a2a2a"/>
<path d="M252.6 48.2 L256.4 48.2 L254.5 50.4 Z" fill="#444"/>
<g fill="none" stroke-width="1">
<!-- row1 constraints: cols 424.3,442.4,460.5,478.6 ; rows 41.3,59.3,77.2 -->
<!-- coincident -->
<line x1="429.5" y1="44.5" x2="429.5" y2="53" stroke="#d04858" stroke-width="1.1"/>
<circle cx="429.5" cy="53.3" r="1.1" fill="#c03040"/>
<line x1="431" y1="53.3" x2="438.5" y2="53.3" stroke="#555" stroke-width="1"/>
<!-- collinear -->
<line x1="446.5" y1="55" x2="452" y2="50" stroke="#555" stroke-width="1.1"/>
<line x1="453" y1="49" x2="457" y2="45.3" stroke="#e09070" stroke-width="1.1"/>
<path d="M446 48.5 L449 50.5 L448 48.8 Z" fill="#222" stroke="#222" stroke-width="0.8"/>
<!-- concentric -->
<circle cx="469.6" cy="49.4" r="5.3" stroke="#d04858" stroke-width="1"/>
<circle cx="469.6" cy="49.4" r="3.3" stroke="#555" stroke-width="1"/>
<circle cx="469.6" cy="49.4" r="2.3" stroke="#d88" stroke-width="0.5"/>
<!-- fix (lock) -->
<path d="M485 48 L485 46.5 Q485 43.5 487.6 43.5 Q490.2 43.5 490.2 46.5 L490.2 48" stroke="#b07060" stroke-width="1.1"/>
<rect x="483.3" y="48" width="8.6" height="6.8" rx="1" fill="#e9a888" stroke="#b07060" stroke-width="0.8"/>
<line x1="487.6" y1="50" x2="487.6" y2="52.5" stroke="#8a5040" stroke-width="0.8"/>
<!-- parallel -->
<line x1="427.5" y1="71" x2="436.5" y2="62" stroke="#555" stroke-width="1.1"/>
<line x1="430" y1="72.5" x2="439" y2="63.5" stroke="#d04858" stroke-width="1.1"/>
<!-- perpendicular -->
<line x1="448" y1="72" x2="456" y2="62.5" stroke="#555" stroke-width="1.1"/>
<line x1="446" y1="67.5" x2="451" y2="72.5" stroke="#d04858" stroke-width="1.1"/>
<!-- horizontal -->
<line x1="463.8" y1="64.3" x2="474.3" y2="64.3" stroke="#555" stroke-width="1.1"/>
<line x1="463.8" y1="66.6" x2="474.3" y2="66.6" stroke="#d04858" stroke-width="1.2"/>
<path d="M465 67.5 L464.3 69 M467.5 67.5 L466.8 69 M470 67.5 L469.3 69 M472.5 67.5 L471.8 69" stroke="#d04858" stroke-width="0.8"/>
<!-- vertical -->
<line x1="489.6" y1="61.5" x2="489.6" y2="73" stroke="#555" stroke-width="1.1"/>
<line x1="486.9" y1="61.5" x2="486.9" y2="73" stroke="#d04858" stroke-width="1.1"/>
<path d="M486 63 L484.6 62.3 M486 65.5 L484.6 64.8 M486 68 L484.6 67.3 M486 70.5 L484.6 69.8" stroke="#d04858" stroke-width="0.8"/>
<!-- tangent -->
<circle cx="430.5" cy="87.5" r="3.8" stroke="#d04858" stroke-width="1.1"/>
<line x1="429" y1="81" x2="437" y2="89.5" stroke="#555" stroke-width="1.1"/>
<!-- smooth -->
<path d="M445.5 80.5 Q449 80 452 83.5 Q454 86 458 88" stroke="#555" stroke-width="1.1"/>
<path d="M447 81.5 Q451 84 453 87 Q454 90 455.5 92" stroke="#d04858" stroke-width="1.1"/>
<circle cx="452.5" cy="84.5" r="1.1" fill="#222"/>
<!-- symmetric -->
<path d="M465.5 81 L464 81 L464 89.5 L465.5 89.5 M472.8 81 L474.3 81 L474.3 89.5 L472.8 89.5" stroke="#d04858" stroke-width="1.1"/>
<path d="M469.2 80 L469.2 82 M469.2 83.5 L469.2 85.5 M469.2 87 L469.2 89 M469.2 90.5 L469.2 92" stroke="#555" stroke-width="0.9"/>
<!-- equal -->
<line x1="483" y1="83.5" x2="492" y2="83.5" stroke="#d04858" stroke-width="1.1"/>
<line x1="483" y1="87" x2="492" y2="87" stroke="#d04858" stroke-width="1.1"/>

<!-- pattern: rect -->
<path d="M514 46.5 L522 46.5 M514 53.5 L522 53.5 M513.4 47.5 L513.4 52.5" stroke="#444" stroke-width="0.9"/>
<rect x="512" y="45" width="3" height="3" fill="#fff" stroke="#2050a0" stroke-width="0.9"/>
<rect x="521" y="45" width="3" height="3" fill="#fff" stroke="#2050a0" stroke-width="0.9"/>
<rect x="512" y="52" width="3" height="3" fill="#5a8ad0" stroke="#2050a0" stroke-width="0.9"/>
<rect x="521" y="52" width="3" height="3" fill="#5a8ad0" stroke="#2050a0" stroke-width="0.9"/>
<!-- pattern: circular -->
<circle cx="517.9" cy="67.3" r="4.5" stroke="#2a5aa8" stroke-width="0.9"/>
<rect x="516.5" y="61.5" width="3" height="3" fill="#fff" stroke="#2050a0" stroke-width="0.8"/>
<rect x="512" y="66" width="3" height="3" fill="#5a8ad0" stroke="#2050a0" stroke-width="0.8"/>
<rect x="521" y="66" width="3" height="3" fill="#5a8ad0" stroke="#2050a0" stroke-width="0.8"/>
<rect x="516.5" y="70.3" width="3" height="3" fill="#5a8ad0" stroke="#2050a0" stroke-width="0.8"/>
<!-- pattern: mirror -->
<path d="M513.5 80.5 L516 80.5 L516 82.5 L515 82.5 L515 89 L516 89 L516 91 L513.5 91 Z" fill="#e8eef6" stroke="#2a2a3a" stroke-width="0.8"/>
<path d="M522.5 80.5 L520 82.5 L520 89 L522.5 91 Z" fill="#5a8ad0" stroke="#2a4a8a" stroke-width="0.8"/>
<line x1="518" y1="79.5" x2="518" y2="92" stroke="#333" stroke-width="1"/>

<!-- modify: move -->
<path d="M543 49 L553 49 M548 44 L548 54" stroke="#222" stroke-width="1"/>
<path d="M548 43.3 L546.3 45.5 L549.7 45.5 Z M548 54.7 L546.3 52.5 L549.7 52.5 Z M542.3 49 L544.5 47.3 L544.5 50.7 Z M553.7 49 L551.5 47.3 L551.5 50.7 Z" fill="#222"/>
<rect x="546.8" y="47.8" width="2.4" height="2.4" fill="#fff" stroke="#222" stroke-width="0.6"/>
<!-- trim -->
<path d="M560 45 L568 52 M560 52 L567 45.5" stroke="#3a78c8" stroke-width="1.1"/>
<circle cx="568" cy="53" r="1.7" stroke="#333" stroke-width="0.8"/>
<circle cx="571" cy="50.5" r="1.7" stroke="#333" stroke-width="0.8"/>
<line x1="570" y1="44" x2="570" y2="48" stroke="#555" stroke-width="0.8"/>
<!-- scale -->
<rect x="579.5" y="44" width="11" height="11" fill="#a8c4ea" stroke="#2a4a7a" stroke-width="0.9"/>
<rect x="579.5" y="49" width="6" height="6" fill="#fff" stroke="#2a4a7a" stroke-width="0.9"/>
<!-- copy -->
<circle cx="542.5" cy="64" r="2.3" fill="#fff" stroke="#444" stroke-width="0.9"/>
<circle cx="549" cy="69.5" r="2.8" fill="#8aaee0" stroke="#2a5aa0" stroke-width="0.9"/>
<circle cx="551" cy="71" r="2.8" fill="#8aaee0" stroke="#2a5aa0" stroke-width="0.9"/>
<path d="M546 63 L549.5 63 L549.5 65.5" stroke="#333" stroke-width="0.9"/>
<!-- extend -->
<path d="M560 68 L563 68 M564.5 65 L569 65" stroke="#333" stroke-width="1"/>
<path d="M571 65 L568.5 63.3 L568.5 66.7 Z" fill="#222"/>
<line x1="571.5" y1="61.5" x2="571.5" y2="73" stroke="#3a78c8" stroke-width="1"/>
<!-- stretch -->
<path d="M580 62 L585.5 62 L590 73.5 L580 73.5 Z" fill="#c8d8ee" stroke="#2a4a7a" stroke-width="0.9"/>
<path d="M580 62 L585 62 L585 73.5" stroke="#333" stroke-width="0.9"/>
<path d="M583 68.5 L588 68.5" stroke="#222" stroke-width="1"/>
<path d="M589 68.5 L587 67 L587 70 Z" fill="#222"/>
<!-- rotate -->
<path d="M546 81.5 A4.8 4.8 0 1 0 550.7 82.3" stroke="#333" stroke-width="1.1"/>
<path d="M545 79.8 L548.3 81 L545.8 83.3 Z" fill="#333"/>
<!-- split -->
<path d="M560 85.5 L563.5 85.5 M568 85.5 L571.5 85.5" stroke="#444" stroke-width="1"/>
<line x1="565.8" y1="81" x2="565.8" y2="90.5" stroke="#3a78c8" stroke-width="1"/>
<!-- offset -->
<path d="M578.5 91 L578.5 86 Q578.5 84 580.5 84 L582 84 L582 80.5 L586 80.5 L586 84 Q590 84 590.5 88 L590.5 89 L578.5 89" fill="#dde8f6" stroke="#2a5aa0" stroke-width="0.9"/>
<line x1="578.5" y1="91" x2="591" y2="91" stroke="#e0a000" stroke-width="1"/>

<!-- layout: 605.5 -->
<rect x="609" y="46" width="8" height="8" fill="#cfe0f5" stroke="#2a4a7a" stroke-width="0.9"/>
<rect x="611" y="49.5" width="5" height="5" fill="#fff" stroke="#2a4a7a" stroke-width="0.8"/>
<circle cx="618.5" cy="44.5" r="2" fill="#f8a020" stroke="#e07000" stroke-width="0.5"/>
<rect x="609" y="63.5" width="4.5" height="4.5" fill="#9ec0ee" stroke="#2a4a7a" stroke-width="0.8"/>
<rect x="613.5" y="68" width="4.5" height="4.5" fill="#fff" stroke="#2a4a7a" stroke-width="0.8"/>
<rect x="609" y="68" width="4.5" height="4.5" fill="#e8eef8" stroke="#2a4a7a" stroke-width="0.8"/>
<circle cx="618.5" cy="62.5" r="2" fill="#f8a020" stroke="#e07000" stroke-width="0.5"/>
<rect x="609" y="82" width="7" height="7" fill="#eee" stroke="#555" stroke-width="0.8"/>
<circle cx="616" cy="89" r="3" fill="#fff" stroke="#444" stroke-width="0.8"/>
<circle cx="618.5" cy="80.5" r="2" fill="#f8a020" stroke="#e07000" stroke-width="0.5"/>

<!-- insert: 638.5 -->
<rect x="642" y="44.5" width="10" height="9" fill="#222" stroke="#555" stroke-width="0.6"/>
<path d="M642.5 53 L646 48.5 L648 50.5 L651.5 47 L651.5 53 Z" fill="#c87a68"/>
<path d="M642.5 53 L646 50 L651.5 53 Z" fill="#e8e8e8"/>
<rect x="642" y="62" width="10" height="10" fill="#c8e0c0" stroke="#3a8a3a" stroke-width="0.8"/>
<path d="M645 63.5 L649 68 M649 63.5 L645 68" stroke="#1a7a1a" stroke-width="1"/>
<rect x="641.5" y="69" width="11" height="3.5" fill="#3a78c8"/>
<rect x="642" y="80" width="10" height="11" fill="#fff" stroke="#445" stroke-width="0.8"/>
<path d="M642.3 90.7 L642.3 86 L651.7 83.5 L651.7 90.7 Z" fill="#e8b818"/>
<path d="M642.3 80.3 L646.5 80.3 L646.5 85 L642.3 85 Z" fill="#2a5aa0"/>

<!-- format col1 666.4 -->
<path d="M669.5 46.5 L676 50.5 L681.5 50.5 M676 50.5 L679.5 53.5" stroke="#d85060" stroke-width="1"/>
<path d="M669.5 66.8 Q670 63.5 675 63.5 Q680.5 63.5 681 66.8 Q680.5 70.5 675 70.5 Q670 70.5 669.5 66.8 Z" stroke="#666" stroke-width="0.9"/>
<path d="M674 66.5 L676 66.5 M675 65.5 L675 67.5" stroke="#888" stroke-width="0.6"/>
<!-- format col2 688 -->
<path d="M691.5 49.5 L695.5 49.5 M698.5 49.5 L702.5 49.5 M697 44.5 L697 48 M697 51 L697 54.5" stroke="#333" stroke-width="1"/>
<rect x="696.2" y="48.7" width="1.6" height="1.6" fill="#222"/>
<path d="M691.5 62.5 L691.5 67 M702.5 62.5 L702.5 67 M691.5 64.7 L702.5 64.7 M694 63 L696 66 M696 63 L694 66 M697.5 62.5 L697.5 67 M700 62.5 L700 67" stroke="#444" stroke-width="0.8"/>
<rect x="691" y="68.5" width="12" height="4" fill="#fff" stroke="#444" stroke-width="0.8"/>

<!-- finish checkmark -->
<path d="M715.5 56.5 L720 52.5 L724 58 L731 47 L731 55 L725.5 65.2 Q724 66.5 722.5 65 Z" fill="#5cae5a" stroke="#3a7e3e" stroke-width="0.9" stroke-linejoin="round"/>
</g>
<!--ICONS-->
</svg>
</body></html>
